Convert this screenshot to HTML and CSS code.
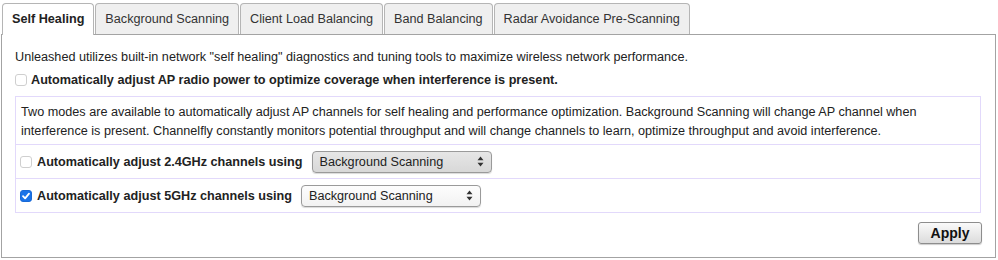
FILE: index.html
```html
<!DOCTYPE html>
<html lang="en">
<head>
  <meta charset="UTF-8" />
  <title>Self Healing</title>
  <link rel="stylesheet" href="styles.css">
</head>
<body>
<div class="wrap">
  <div class="tabs">
    <div class="tab active">Self Healing</div>
    <div class="tab">Background Scanning</div>
    <div class="tab">Client Load Balancing</div>
    <div class="tab">Band Balancing</div>
    <div class="tab">Radar Avoidance Pre-Scanning</div>
  </div>

  <div class="panel">
    <p class="intro">Unleashed utilizes built-in network "self healing" diagnostics and tuning tools to maximize wireless network performance.</p>
    <label class="check-line">
      <span class="box"></span>
      Automatically adjust AP radio power to optimize coverage when interference is present.
    </label>

    <div class="channels">
      <div class="desc">Two modes are available to automatically adjust AP channels for self healing and performance optimization. Background Scanning will change AP channel when interference is present. Channelfly constantly monitors potential throughput and will change channels to learn, optimize throughput and avoid interference.</div>
      <div class="row">
        <span class="box"></span>
        <span class="label">Automatically adjust 2.4GHz channels using</span>
        <div class="select dim">
          <span>Background Scanning</span>
          <svg width="7" height="11" viewBox="0 0 7 11"><path d="M3.5 0.5 L6.5 4.2 H0.5 Z M3.5 10.5 L6.5 6.8 H0.5 Z" fill="#333"/></svg>
        </div>
      </div>
      <div class="row">
        <span class="box checked">
          <svg width="10" height="10" viewBox="0 0 10 10"><path d="M2 5.2 L4.1 7.4 L8 2.6" fill="none" stroke="#fff" stroke-width="1.8" stroke-linecap="round" stroke-linejoin="round"/></svg>
        </span>
        <span class="label">Automatically adjust 5GHz channels using</span>
        <div class="select">
          <span>Background Scanning</span>
          <svg width="7" height="11" viewBox="0 0 7 11"><path d="M3.5 0.5 L6.5 4.2 H0.5 Z M3.5 10.5 L6.5 6.8 H0.5 Z" fill="#333"/></svg>
        </div>
      </div>
    </div>

    <div class="actions">
      <button class="apply">Apply</button>
    </div>
  </div>
</div>
</body>
</html>
```

FILE: styles.css
```css
body {
  margin: 0;
  font-family: "Liberation Sans", Arial, sans-serif;
  font-size: 12.65px;
  color: #222;
  background: #fff;
}
.wrap {
  padding: 3px 2px 0 1px;
}
.tabs {
  display: flex;
  padding-left: 1px;
  gap: 1px;
}
.tab {
  height: 30px;
  line-height: 31px;
  padding: 0 9px;
  color: #333;
  background: #efefef;
  border: 1px solid #b5b5b5;
  border-bottom: none;
  border-radius: 4px 4px 0 0;
}
.tab.active {
  background: #fff;
  font-weight: bold;
  color: #222;
  height: 31px;
  margin-bottom: -1px;
  position: relative;
}
.panel {
  border: 1px solid #a3a3a3;
  height: 222px;
  padding: 0 14px 0 13px;
}
.intro {
  margin: 14px 0 0;
  line-height: 16px;
}
.check-line {
  display: flex;
  align-items: center;
  gap: 4px;
  margin-top: 8px;
  font-weight: bold;
}
.box {
  width: 10px;
  height: 10px;
  border: 1px solid #cfcfcf;
  border-radius: 3px;
  background: #fff;
  flex: none;
  display: flex;
  align-items: center;
  justify-content: center;
}
.box.checked {
  background: #1a73e8;
  border-color: #1a6ad6;
}
.channels {
  margin-top: 9px;
  border: 1px solid #e2d9fb;
}
.desc {
  padding: 6px 5px 3px;
  line-height: 19px;
  border-bottom: 1px solid #e2d9fb;
}
.row {
  display: flex;
  align-items: center;
  height: 33px;
  padding-left: 4px;
  gap: 5px;
  font-weight: bold;
}
.row + .row {
  border-top: 1px solid #e2d9fb;
}
.label {
  margin-right: 4px;
}
.select {
  width: 164px;
  height: 20px;
  padding: 0 7px;
  display: flex;
  align-items: center;
  justify-content: space-between;
  font-weight: normal;
  color: #222;
  border: 1px solid #9a9a9a;
  border-radius: 4px;
  background: linear-gradient(#fdfdfd, #f2f2f2);
  box-shadow: 0 1px 1px rgba(0,0,0,0.15);
}
.select.dim {
  background: linear-gradient(#e6e6e6, #d8d8d8);
}
.actions {
  display: flex;
  justify-content: flex-end;
  margin-top: 9px;
}
.apply {
  width: 64px;
  height: 22px;
  margin-right: -1px;
  font-family: inherit;
  font-size: 14px;
  font-weight: bold;
  color: #111;
  border: 1px solid #8d8d8d;
  border-radius: 3px;
  background: linear-gradient(#fafafa, #dcdcdc);
  box-shadow: 0 1px 1px rgba(0,0,0,0.2);
}
```
